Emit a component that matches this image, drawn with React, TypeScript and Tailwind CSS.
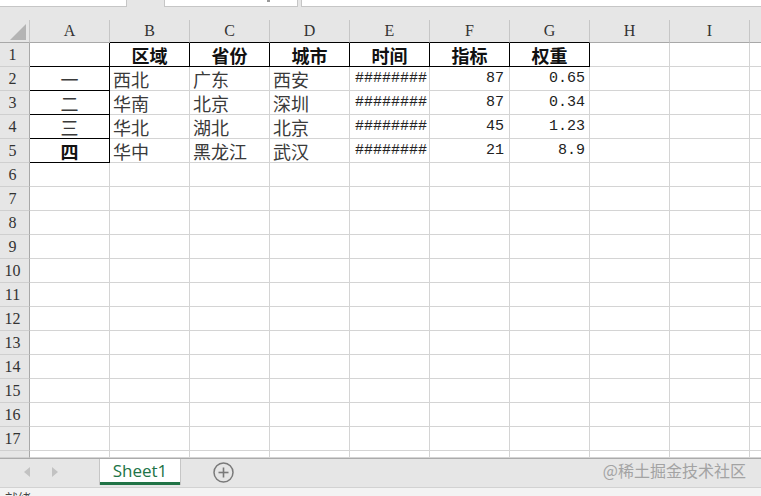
import React from 'react';

const COLS = ['A', 'B', 'C', 'D', 'E', 'F', 'G', 'H', 'I'];

const DATA: string[][] = [
  ['', '区域', '省份', '城市', '时间', '指标', '权重'],
  ['一', '西北', '广东', '西安', '########', '87', '0.65'],
  ['二', '华南', '北京', '深圳', '########', '87', '0.34'],
  ['三', '华北', '湖北', '北京', '########', '45', '1.23'],
  ['四', '华中', '黑龙江', '武汉', '########', '21', '8.9'],
];

const CJK = "font-['Noto_Sans_CJK_SC',sans-serif] text-[18px]";
const MONO = "font-['Liberation_Mono',monospace] text-[15px]";
const SERIF = "font-['Liberation_Serif',serif] text-[16px] text-[#333]";

// black box borders: B1:G1 header and A2:A5
function isBoxed(r: number, c: number) {
  return (r === 0 && c <= 6) || (r >= 1 && r <= 4 && c === 0);
}

function Cell({ r, c }: { r: number; c: number }) {
  const value = DATA[r]?.[c] ?? '';
  const boxed = isBoxed(r, c);
  const right = boxed ? 'border-r-black' : 'border-r-[#d4d4d4]';
  const bottom = boxed ? 'border-b-black' : 'border-b-[#d4d4d4]';

  let align = 'justify-start pl-[3px]';
  if (r === 0 || c === 0) align = 'justify-center';
  else if (c === 4) align = 'justify-start pl-[5px]';
  else if (c === 5) align = 'justify-end pr-[5px]';
  else if (c === 6) align = 'justify-end pr-[4px]';

  const isNum = /^[0-9.#]+$/.test(value);
  const bold = r === 0 || (r === 4 && c === 0);

  return (
    <div
      className={`flex h-full w-[80px] shrink-0 items-center overflow-hidden whitespace-nowrap border-r border-b bg-white ${right} ${bottom} ${align}`}
    >
      <span
        className={`${isNum ? MONO : CJK} ${
          bold ? 'font-bold text-[#111]' : isNum ? 'font-normal text-[#222]' : 'font-normal text-[#3a3a3a]'
        } leading-none`}
      >
        {value}
      </span>
    </div>
  );
}

function Row({ r, height }: { r: number; height: string }) {
  return (
    <div className={`flex ${height}`}>
      <div
        className={`flex w-[30px] shrink-0 items-center justify-center border-r border-b border-r-[#a8a8a8] border-b-[#cfcfcf] bg-[#e6e6e6] pr-[4px] leading-none ${SERIF}`}
      >
        {r < 17 ? r + 1 : ''}
      </div>
      {COLS.map((_, c) => (
        <Cell key={c} r={r} c={c} />
      ))}
      <div className="h-full flex-1 border-b border-b-[#d4d4d4] bg-white" />
    </div>
  );
}

export default function App() {
  return (
    <div className="relative flex h-[496px] w-[761px] flex-col overflow-hidden bg-[#e6e6e6]">
      {/* formula bar remnants */}
      <div className="flex h-[20px] shrink-0 items-start">
        <div className="h-[7px] w-[127px] border-r border-b border-[#c6c6c6] bg-white" />
        <div className="relative ml-[37px] h-[7px] w-[134px] border-x border-b border-[#c6c6c6] bg-white">
          <div className="absolute left-[102px] top-0 h-[2px] w-[3px] bg-[#9a9a9a]" />
        </div>
        <div className="ml-[3px] h-[7px] flex-1 border-l border-b border-[#c6c6c6] bg-white" />
      </div>

      {/* column headers */}
      <div className="flex h-[23px] shrink-0">
        <div className="flex w-[30px] shrink-0 items-end justify-end border-r border-b border-r-[#c6c6c6] border-b-[#a8a8a8] pr-[3px] pb-[2px]">
          <svg width="16" height="16" viewBox="0 0 16 16">
            <polygon points="16,0 16,16 0,16" fill="#b4b4b4" />
          </svg>
        </div>
        {COLS.map((col, c) => (
          <div
            key={col}
            className={`flex w-[80px] shrink-0 items-center justify-center border-r border-b border-r-[#c6c6c6] leading-none ${
              c >= 1 && c <= 6 ? 'border-b-black' : 'border-b-[#a8a8a8]'
            } ${SERIF}`}
          >
            {col}
          </div>
        ))}
        <div className="flex-1 border-b border-b-[#a8a8a8]" />
      </div>

      {/* rows */}
      <div className="flex flex-col">
        {Array.from({ length: 17 }, (_, r) => (
          <Row key={r} r={r} height="h-[24px]" />
        ))}
        <Row r={17} height="h-[7px]" />
      </div>

      {/* sheet tabs */}
      <div className="flex h-[29px] shrink-0 items-start border-t border-[#ababab] bg-[#e6e6e6]">
        <div className="flex h-[26px] w-[99px] shrink-0 items-center">
          <svg className="ml-[24px]" width="6" height="10" viewBox="0 0 6 10">
            <polygon points="6,0 6,10 0,5" fill="#c2c2c2" />
          </svg>
          <svg className="ml-[22px]" width="6" height="10" viewBox="0 0 6 10">
            <polygon points="0,0 0,10 6,5" fill="#c2c2c2" />
          </svg>
        </div>
        <div className="flex h-[26px] w-[82px] shrink-0 flex-col border-x border-[#c6c6c6] bg-white">
          <div className="flex flex-1 items-center justify-center font-['Open_Sans',sans-serif] text-[17px] leading-none text-[#217346]">
            Sheet1
          </div>
          <div className="h-[3px] bg-[#217346]" />
        </div>
        <div className="ml-[32px] flex h-[26px] items-center">
          <svg width="21" height="21" viewBox="0 0 21 21">
            <circle cx="10.5" cy="10.5" r="9.5" fill="none" stroke="#7a7a7a" strokeWidth="1.5" />
            <line x1="10.5" y1="5.5" x2="10.5" y2="15.5" stroke="#7a7a7a" strokeWidth="1.6" />
            <line x1="5.5" y1="10.5" x2="15.5" y2="10.5" stroke="#7a7a7a" strokeWidth="1.6" />
          </svg>
        </div>
      </div>

      {/* status bar */}
      <div className="h-[9px] shrink-0 overflow-hidden border-t border-[#d2d2d2] bg-[#f3f3f3] pl-[5px]">
        <span className="block pt-[3px] font-['Noto_Sans_CJK_SC',sans-serif] text-[13px] leading-none text-[#444]">
          就绪
        </span>
      </div>

      {/* watermark */}
      <div className="absolute right-[15px] top-[462px] font-['Noto_Sans_CJK_SC',sans-serif] text-[16px] leading-none text-[#a3a3a3]">
        @稀土掘金技术社区
      </div>
    </div>
  );
}
